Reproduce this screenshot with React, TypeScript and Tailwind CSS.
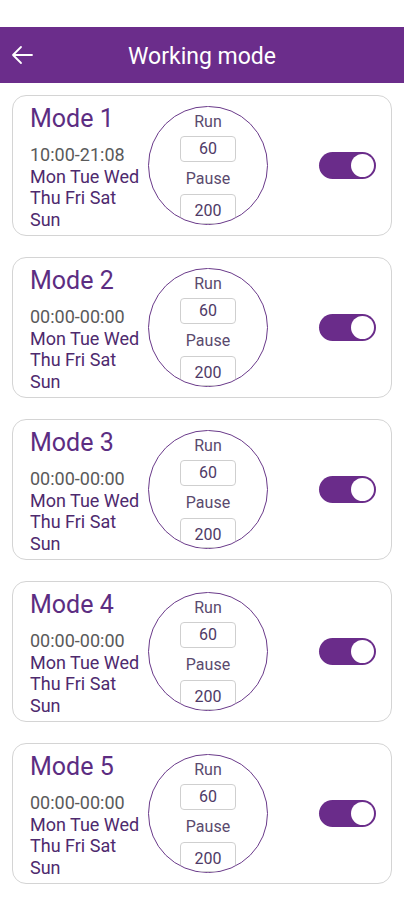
import React from 'react';

const modes = [
  { name: 'Mode 1', time: '10:00-21:08' },
  { name: 'Mode 2', time: '00:00-00:00' },
  { name: 'Mode 3', time: '00:00-00:00' },
  { name: 'Mode 4', time: '00:00-00:00' },
  { name: 'Mode 5', time: '00:00-00:00' },
];

function ModeCard({ name, time }: { name: string; time: string }) {
  return (
    <div className="flex items-center h-[141px] rounded-[14px] border border-[#d4d4d4] bg-white pl-[17px] pr-[15px]">
      {/* Name + schedule */}
      <div className="w-[118px] flex flex-col self-start pt-[8px] whitespace-nowrap">
        <div className="text-[25px] leading-[30px] text-[#5c2d82]">{name}</div>
        <div className="mt-[10px] text-[18px] leading-[21.5px] text-[#5a5a5a]">{time}</div>
        <div className="text-[18px] leading-[21.5px] text-[#4e2a6e]">Mon Tue Wed</div>
        <div className="text-[18px] leading-[21.5px] text-[#4e2a6e]">Thu Fri Sat</div>
        <div className="text-[18px] leading-[21.5px] text-[#4e2a6e]">Sun</div>
      </div>

      {/* Run / Pause circle */}
      <div className="w-[120px] h-[119px] rounded-full border-[1.5px] border-[#6a3a8a] overflow-hidden flex flex-col items-center pt-[5px] text-[#5a4a6e]">
        <div className="text-[16px] leading-[20px]">Run</div>
        <div className="mt-[4px] w-[56px] h-[26px] shrink-0 rounded-[4px] border border-[#cfcfcf] flex items-center justify-center text-[16px] text-[#4e3a66]">
          60
        </div>
        <div className="mt-[7px] text-[16px] leading-[20px]">Pause</div>
        <div className="mt-[5px] w-[56px] h-[30px] shrink-0 rounded-[4px] border border-[#cfcfcf] flex items-start justify-center pt-[4px] text-[16px] text-[#4e3a66]">
          200
        </div>
      </div>

      {/* Toggle */}
      <div className="flex-1 flex justify-end">
        <div className="w-[57px] h-[27px] rounded-full bg-[#6a2c8a] flex items-center justify-end pr-[2px]">
          <div className="w-[23px] h-[23px] rounded-full bg-white"></div>
        </div>
      </div>
    </div>
  );
}

export default function App() {
  return (
    <div className="w-[404px] h-[900px] bg-white overflow-hidden" style={{ fontFamily: 'Roboto, "Noto Sans", sans-serif' }}>
      <div className="h-[27px]"></div>
      <header className="relative h-[56px] bg-[#6b2d8b] flex items-center justify-center">
        <svg className="absolute left-[10px] top-[17px]" width="24" height="22" viewBox="0 0 24 22" fill="none">
          <path d="M22 11H3M11 3L3 11L11 19" stroke="white" strokeWidth="1.8" strokeLinecap="round" strokeLinejoin="round" />
        </svg>
        <h1 className="text-white text-[23px] leading-none pt-[3px]">Working mode</h1>
      </header>

      <div className="flex flex-col gap-[21px] px-[12px] pt-[12px]">
        {modes.map((m) => (
          <ModeCard key={m.name} name={m.name} time={m.time} />
        ))}
      </div>
    </div>
  );
}
